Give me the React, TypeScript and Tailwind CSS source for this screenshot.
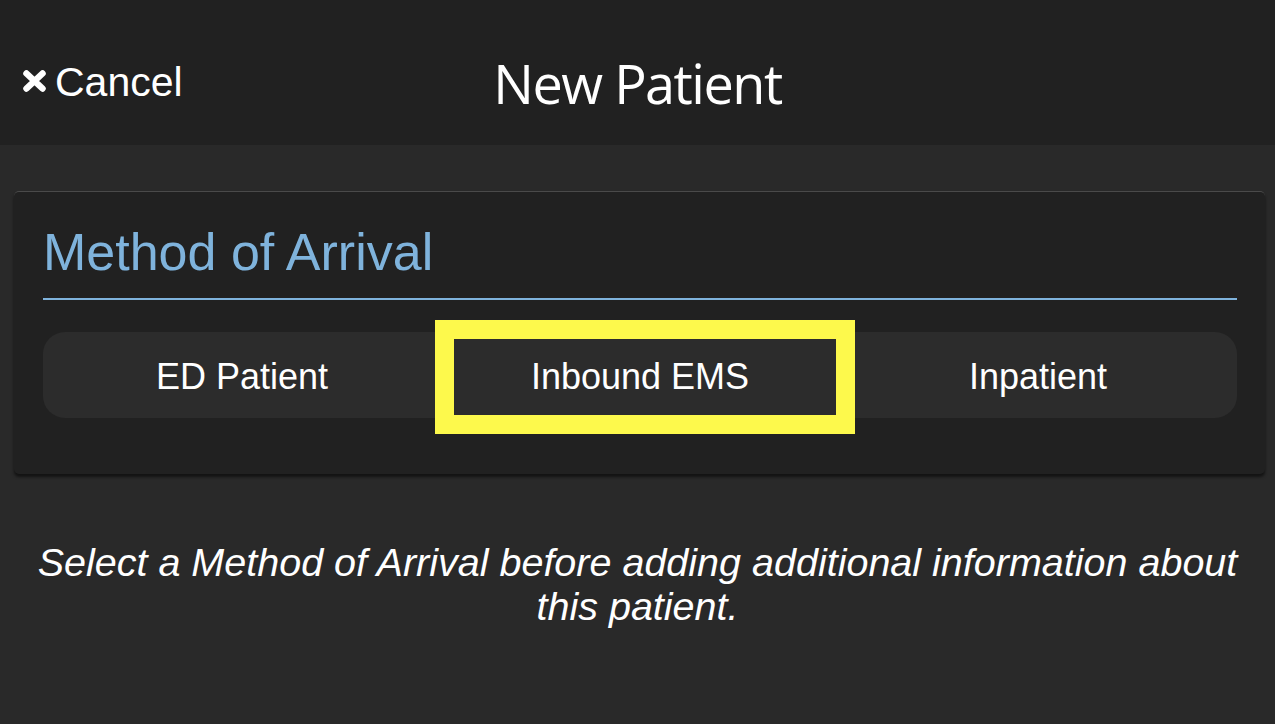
export default function App() {
  const options = ["ED Patient", "Inbound EMS", "Inpatient"];

  return (
    <div className="min-h-screen w-full bg-[#292929] text-white font-['Liberation_Sans',Arial,sans-serif]">
      {/* top bar */}
      <div className="relative flex h-[145px] items-center justify-center bg-[#212121] pt-[21px]">
        <button className="absolute left-[22px] top-[56px] flex items-center gap-[8px] text-[41px] leading-[52px] text-white">
          <svg width="25" height="24" viewBox="0 0 25 24" className="mt-[-2px]">
            <path
              d="M4.5 4.5 L20.5 19.5 M20.5 4.5 L4.5 19.5"
              stroke="white"
              strokeWidth="6.5"
              strokeLinecap="round"
            />
          </svg>
          Cancel
        </button>
        <h1 className="font-['Open_Sans',sans-serif] text-[54px] font-medium leading-none tracking-[-1.5px]">
          New Patient
        </h1>
      </div>

      {/* method card */}
      <div className="ml-[14px] mr-[10px] mt-[46px] rounded-[5px] border-t border-[#4a4a4a] bg-[#212121] pb-[56px] pl-[29px] pr-[28px] pt-[30px] shadow-[0_3px_3px_rgba(0,0,0,0.55)]">
        <h2 className="border-b-2 border-[#7fb3dc] pb-[16px] text-[52px] leading-[60px] text-[#7fb3dc]">
          Method of Arrival
        </h2>

        <div className="relative mt-[32px] grid h-[86px] grid-cols-3 rounded-[22px] bg-[#2c2c2c]">
          {options.map((label) => (
            <div key={label} className="flex items-center justify-center pt-[4px] text-[36px] text-white">
              {label}
            </div>
          ))}
          <div className="pointer-events-none absolute left-[392px] top-[-12px] h-[114px] w-[420px] border-[19px] border-[#fdf94c]" />
        </div>
      </div>

      <p className="mt-[66px] px-[16px] text-center text-[39.5px] italic leading-[44px] text-white">
        Select a Method of Arrival before adding additional information about this patient.
      </p>
    </div>
  );
}
